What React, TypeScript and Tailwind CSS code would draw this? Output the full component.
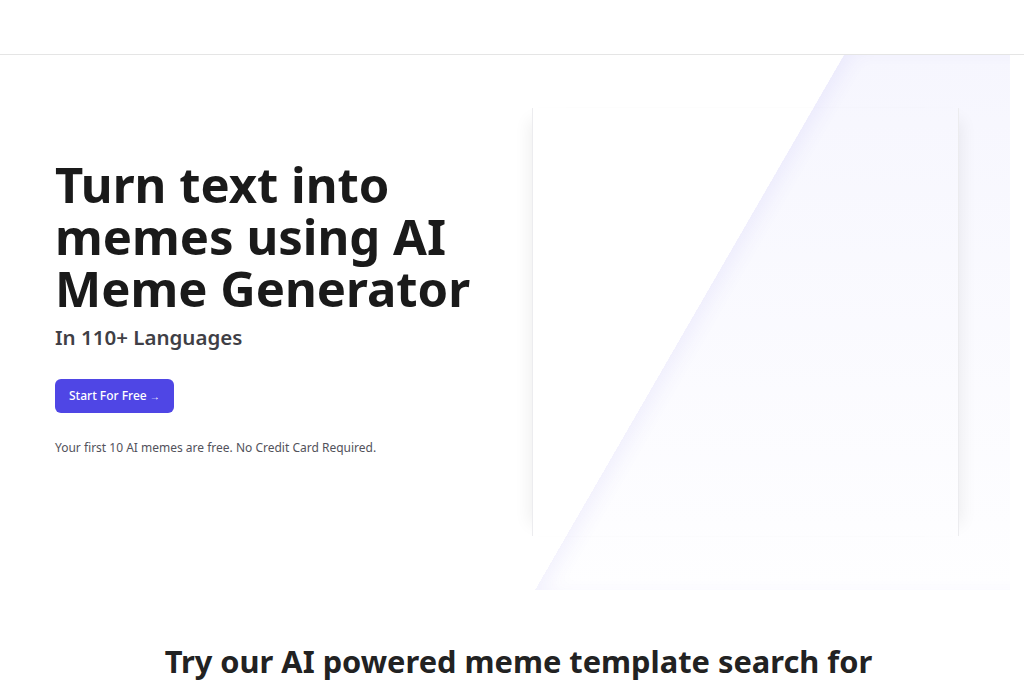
const Hero = () => {
  return (
    <section className="relative">
      {/* slanted background panel */}
      <div className="pointer-events-none absolute inset-y-0 left-0 w-[1010px] overflow-hidden">
        <div className="absolute top-0 left-[844px] h-full w-[700px] origin-top-left -skew-x-[30deg] bg-gradient-to-b from-[#f6f6fe] to-[#fefeff] shadow-[inset_14px_0_18px_-6px_rgba(79,70,229,0.07)]" />
      </div>
      <div className="relative flex items-start pl-[55px] pr-[65px] pt-[53px] pb-[54px]">
        <div className="mt-[50px] flex-1">
          <h1 className="text-[49px] font-bold leading-[52px] text-[#1a1a1a]">
            Turn text into
            <br />
            memes using AI
            <br />
            Meme Generator
          </h1>
          <p className="mt-[8px] text-[20.5px] font-semibold text-[#3f3f46]">In 110+ Languages</p>
          <button className="mt-[26px] rounded-md bg-[#4f46e5] px-[14px] py-[8px] text-[12px] font-medium text-white">
            Start For Free <span className="text-[10px]">→</span>
          </button>
          <p className="mt-[26px] text-[12px] text-[#52525b]">
            Your first 10 AI memes are free. No Credit Card Required.
          </p>
        </div>
        <div className="h-[428px] w-[427px] border-x border-[#ececef] shadow-[-14px_0_16px_-12px_rgba(0,0,0,0.07),14px_0_16px_-12px_rgba(0,0,0,0.07)]" />
      </div>
    </section>
  )
}

export default function App() {
  return (
    <div className="min-h-screen bg-white font-['Noto_Sans',sans-serif]">
      <header className="h-[55px] border-b border-[#e5e5e5] bg-white" />
      <Hero />
      <div className="pt-[48px] pl-[13px] text-center">
        <h2 className="text-[30.8px] font-bold text-[#222222]">
          Try our AI powered meme template search for
        </h2>
      </div>
    </div>
  )
}
